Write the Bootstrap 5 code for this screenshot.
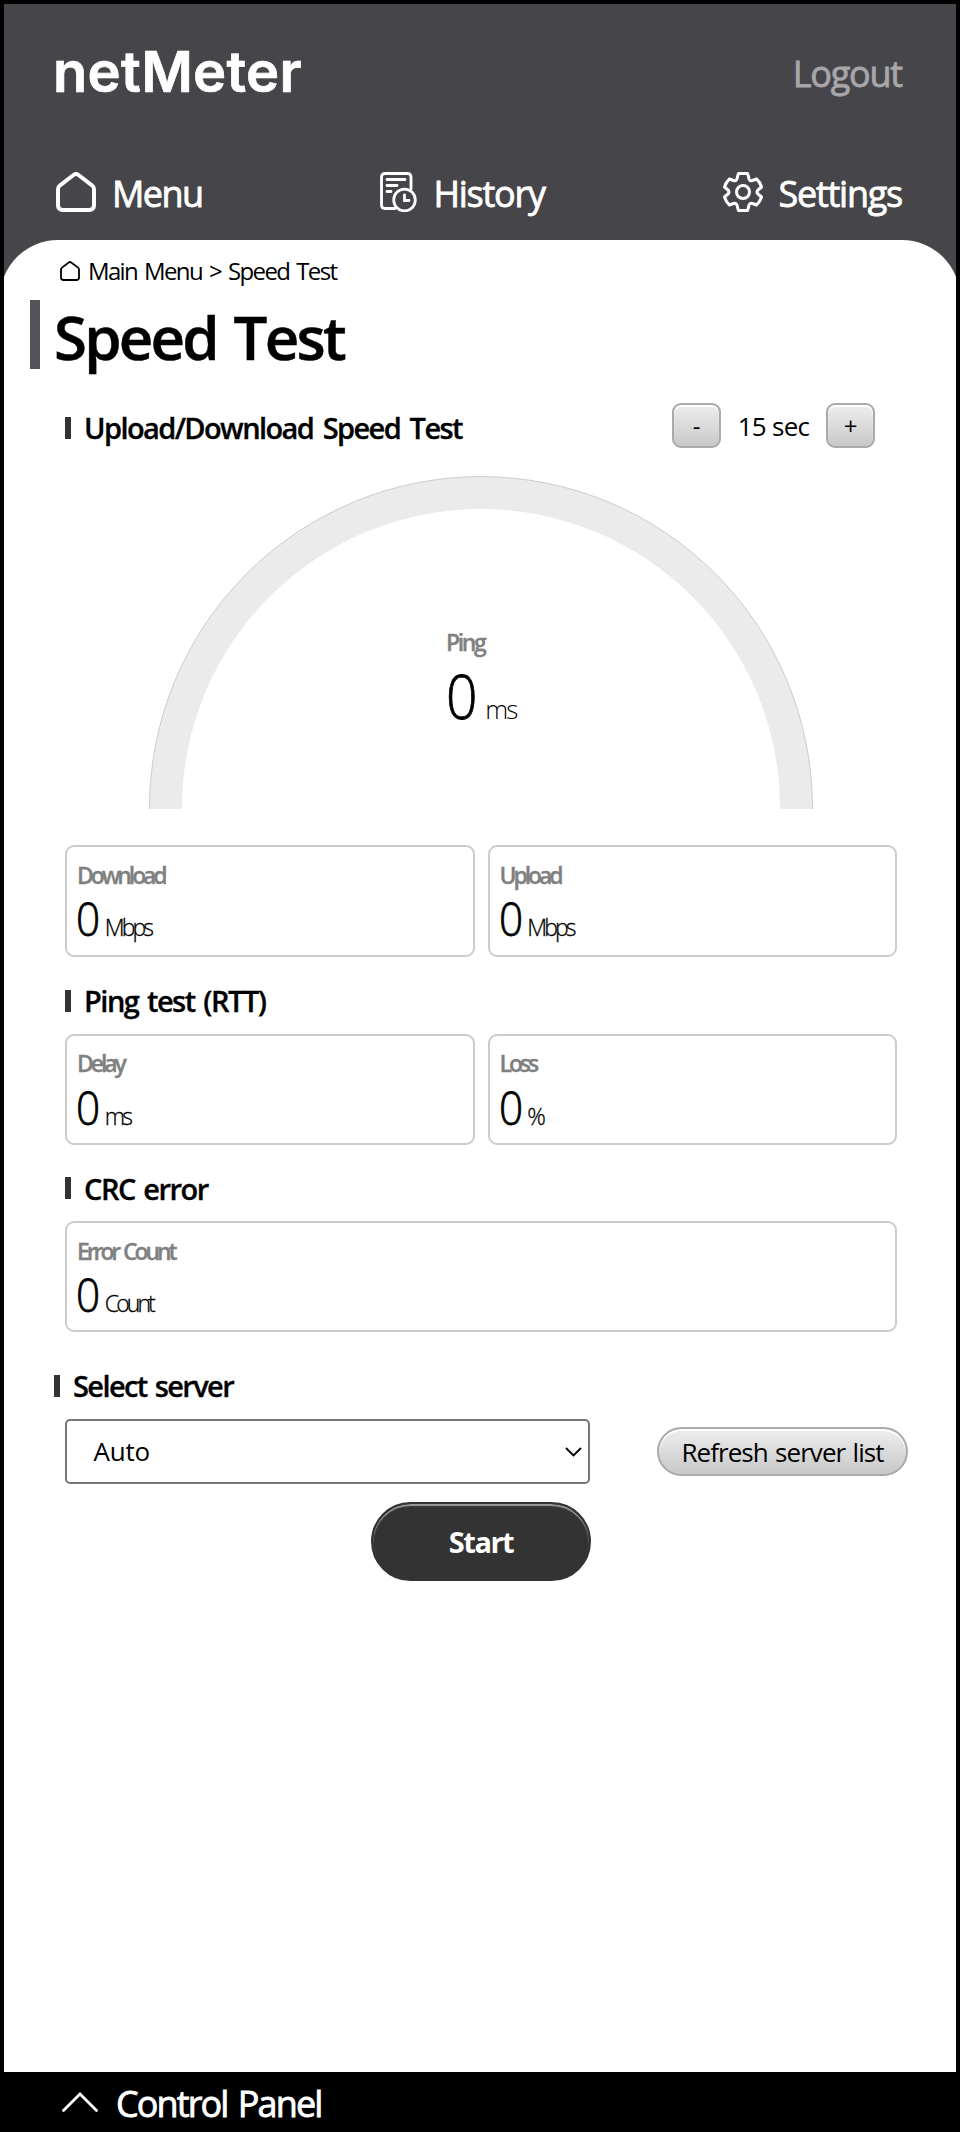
<!DOCTYPE html>
<html lang="en">
<head>
<meta charset="utf-8">
<meta name="viewport" content="width=device-width, initial-scale=1">
<title>netMeter</title>
<link href="https://cdn.jsdelivr.net/npm/bootstrap@5.3.0/dist/css/bootstrap.min.css" rel="stylesheet">
<style>
body{font-family:"Open Sans","Noto Sans",sans-serif;background:#000;color:#000}
.app-frame{height:2132px;padding:4px 4px 0;background:#000}
.app-body{height:2068px;background:#464549;overflow:hidden}
.top-row{height:136px;padding:0 54px 0 52px}
.brand-name{font:600 56px/60px Inter,sans-serif;color:#fff;letter-spacing:.3px;margin-left:-3px;-webkit-text-stroke:.7px #fff}
.logout{font-size:36px;color:#a7a6aa;line-height:40px;letter-spacing:-1.2px;padding-top:3px;-webkit-text-stroke:.8px #a7a6aa}
.menu-row{height:100px;padding:4px 54px 0 52px}
.menu-item{color:#fff;font-size:36px;line-height:40px;-webkit-text-stroke:.8px #fff}
.menu-item span{padding-top:3px;margin-left:16px}
.word-menu{letter-spacing:-1.55px}
.word-history{letter-spacing:-1.25px}
.word-settings{letter-spacing:-1.25px}
.sheet{height:1832px;margin:0 -4px;background:#fff;border-radius:58px 58px 0 0}
.crumbs{height:60px;padding:2px 0 0 60px;font-size:24px;gap:8px;letter-spacing:-1.65px;word-spacing:2.4px}
.page-title{height:69px;margin:0 0 34px 30px;border-left:10px solid #545359;padding-left:14px;font-size:60px;font-weight:600;line-height:74px;letter-spacing:-2.8px;word-spacing:4px;-webkit-text-stroke:.5px #000}
.timer-row{height:45px;padding-right:85px}
.section-title{font-size:29px;font-weight:600;line-height:49px;margin:0;padding-left:65px;gap:13px;letter-spacing:-1.6px;word-spacing:3.5px;-webkit-text-stroke:.3px #000}
.section-title::before{content:"";width:6px;height:22px;background:#333}
.between{height:76.5px;padding-top:11px;letter-spacing:-1.5px;word-spacing:2.5px}
.pad-btn{width:49px;height:45px;border:2px solid #aaa;border-radius:9px;background:linear-gradient(#eee,#c8c8c8);box-shadow:inset 0 2px 1px #fff;font-size:24px;line-height:42px;padding:0;color:#000}
.secs{font-size:26px;width:105px;text-align:center;line-height:47px;letter-spacing:-.7px}
.gauge{width:664px;height:333px;margin:28px 0 36px 149px}
.gauge-text{left:297px;top:151px}
.stat-label{font-size:23px;font-weight:600;color:#808080;line-height:30px;letter-spacing:-3.1px;word-spacing:2px;-webkit-text-stroke:.3px #808080}
.gauge-text .stat-label{letter-spacing:-2.4px}
.digit{transform:scaleX(.92);transform-origin:left}
.gauge-num{font-size:60px;line-height:60px;margin-top:9px;font-weight:300;gap:5px;-webkit-text-stroke:.8px #000}
.gauge-num small{font-size:26px;letter-spacing:-2px;-webkit-text-stroke:0}
.cards{padding:0 63px 0 65px;gap:13px}
.stat{flex:1;height:111px;border:2px solid #ccc;border-radius:9px;padding:12.5px 10px 0}
.speed-cards .stat{height:112px}
.stat-num{font-size:46px;font-weight:300;line-height:50px;margin:3.5px 0 0 -1px;gap:2.5px;-webkit-text-stroke:.8px #000}
.stat-num small{font-size:23px;letter-spacing:-2.9px;-webkit-text-stroke:.3px #000}
.srv-title{padding-left:54px;height:87px;padding-top:20px;word-spacing:2px}
.srv-row{height:65px;padding-left:65px;padding-right:52px}
.srv-select{width:525px;height:65px;border:2px solid #767676;border-radius:5px;padding:0 6px 0 26.5px;font-size:26px;letter-spacing:-.25px}
.refresh{width:251px;height:49px;border:2px solid #aaa;border-radius:25px;background:linear-gradient(#eee,#c8c8c8);box-shadow:inset 0 2px 1px #fff;font-size:26px;line-height:44px;padding:0;color:#000;letter-spacing:-.95px;word-spacing:1.5px}
.start{display:block;width:220px;height:79px;margin:18px 0 0 371px;border:2px solid #333;border-radius:40px;background:#333;box-shadow:inset 0 2px 1px #999;color:#fff;font-weight:700;font-size:29px;padding:0;letter-spacing:-1.5px}
.panel-bar{height:60px;padding-left:58px;color:#fff;font-size:36px;gap:18px;letter-spacing:-1.9px;word-spacing:3px;-webkit-text-stroke:.8px #fff}
.panel-bar span{padding-top:3px}
</style>
</head>
<body>
<div class="app-frame">
 <div class="app-body">
  <header>
   <div class="top-row d-flex align-items-center justify-content-between">
    <span class="brand-name text-nowrap">netMeter</span><span class="logout text-nowrap">Logout</span>
   </div>
   <nav class="menu-row d-flex align-items-center justify-content-between">
    <div class="menu-item d-flex align-items-center"><svg width="40" height="40" viewBox="0 0 40 40" fill="none" stroke="#fff" stroke-width="4" stroke-linejoin="round"><path d="M2 17Q2 15 4 13.300L17.500 3Q20 1 22.500 3L36 13.300Q38 15 38 17V33Q38 38 33 38H7Q2 38 2 33Z"/></svg><span class="word-menu">Menu</span></div>
    <div class="menu-item d-flex align-items-center"><svg width="37" height="40" viewBox="0 0 37 40" fill="none" stroke="#fff" stroke-width="2.800" stroke-linecap="round"><path d="M31 17V5Q31 1.500 27.500 1.500H5Q1.500 1.500 1.500 5V33Q1.500 36.500 5 36.500H15M7 7.500H25M7 13.500H17M7 19.500H11"/><circle cx="24.500" cy="28" r="10.800"/><path d="M24.500 23V28.500H29"/></svg><span class="word-history">History</span></div>
    <div class="menu-item d-flex align-items-center"><svg width="40" height="40" viewBox="0 0 40 40" fill="none" stroke="#fff" stroke-width="3" stroke-linejoin="round"><circle cx="20" cy="20" r="6.500"/><path d="M15.500 1.500H24.500Q25.500 4 26 7Q27 9.500 29.500 8.500L33.500 7Q37 10 38.500 15L34.500 18.500Q33.500 20 34.500 21.500L38.500 25Q37 30 33.500 33L29.500 31.500Q27 30.500 26 33Q25.500 36 24.500 38.500H15.500Q14.500 36 14 33Q13 30.500 10.500 31.500L6.500 33Q3 30 1.500 25L5.500 21.500Q6.500 20 5.500 18.500L1.500 15Q3 10 6.500 7L10.500 8.500Q13 9.500 14 7Q14.500 4 15.500 1.500Z"/></svg><span class="word-settings">Settings</span></div>
   </nav>
  </header>
  <main class="sheet">
   <div class="crumbs d-flex align-items-center"><svg width="20" height="20" viewBox="0 0 40 40" fill="none" stroke="#000" stroke-width="3.600" stroke-linejoin="round"><path d="M2 17Q2 15 4 13.300L17.500 3Q20 1 22.500 3L36 13.300Q38 15 38 17V33Q38 38 33 38H7Q2 38 2 33Z"/></svg><span>Main Menu &gt; Speed Test</span></div>
   <h1 class="page-title">Speed Test</h1>
   <div class="timer-row d-flex justify-content-between align-items-start">
    <h2 class="section-title d-flex align-items-center">Upload/Download Speed Test</h2>
    <div class="d-flex"><button class="pad-btn">-</button><span class="secs">15 sec</span><button class="pad-btn">+</button></div>
   </div>
   <div class="gauge position-relative">
    <svg class="d-block" width="664" height="333" viewBox="0 0 664 333"><path d="M0.500 333V332A331.500 331.500 0 0 1 663.500 332V333H631V332A299 299 0 0 0 33 332V333Z" fill="#ebebeb"/><path d="M0.500 333V332A331.500 331.500 0 0 1 663.500 332V333" fill="none" stroke="#ccc" stroke-width="1"/></svg>
    <div class="gauge-text position-absolute"><div class="stat-label">Ping</div><div class="gauge-num d-flex align-items-baseline"><span class="digit">0</span><small>ms</small></div></div>
   </div>
   <div class="cards speed-cards d-flex">
    <div class="stat"><div class="stat-label">Download</div><div class="stat-num d-flex align-items-baseline"><span class="digit">0</span><small>Mbps</small></div></div>
    <div class="stat"><div class="stat-label">Upload</div><div class="stat-num d-flex align-items-baseline"><span class="digit">0</span><small>Mbps</small></div></div>
   </div>
   <h2 class="section-title between d-flex align-items-center">Ping test (RTT)</h2>
   <div class="cards d-flex">
    <div class="stat"><div class="stat-label">Delay</div><div class="stat-num d-flex align-items-baseline"><span class="digit">0</span><small>ms</small></div></div>
    <div class="stat"><div class="stat-label">Loss</div><div class="stat-num d-flex align-items-baseline"><span class="digit">0</span><small>%</small></div></div>
   </div>
   <h2 class="section-title between d-flex align-items-center">CRC error</h2>
   <div class="cards d-flex">
    <div class="stat"><div class="stat-label">Error Count</div><div class="stat-num d-flex align-items-baseline"><span class="digit">0</span><small>Count</small></div></div>
   </div>
   <h2 class="section-title srv-title d-flex align-items-center">Select server</h2>
   <div class="srv-row d-flex align-items-center justify-content-between">
    <div class="srv-select d-flex align-items-center justify-content-between"><span>Auto</span><svg width="17" height="10" viewBox="0 0 17 10" fill="none" stroke="#000" stroke-width="1.800"><path d="M1 1L8.500 8.500L16 1"/></svg></div>
    <button class="refresh text-nowrap">Refresh server list</button>
   </div>
   <button class="start">Start</button>
  </main>
 </div>
 <footer class="panel-bar d-flex align-items-center"><svg width="36" height="20" viewBox="0 0 36 20" fill="none" stroke="#fff" stroke-width="2.800" stroke-linecap="round"><path d="M1.500 18.500L18 2L34.500 18.500"/></svg><span>Control Panel</span></footer>
</div>
<script src="https://cdn.jsdelivr.net/npm/bootstrap@5.3.0/dist/js/bootstrap.bundle.min.js"></script>
</body>
</html>
